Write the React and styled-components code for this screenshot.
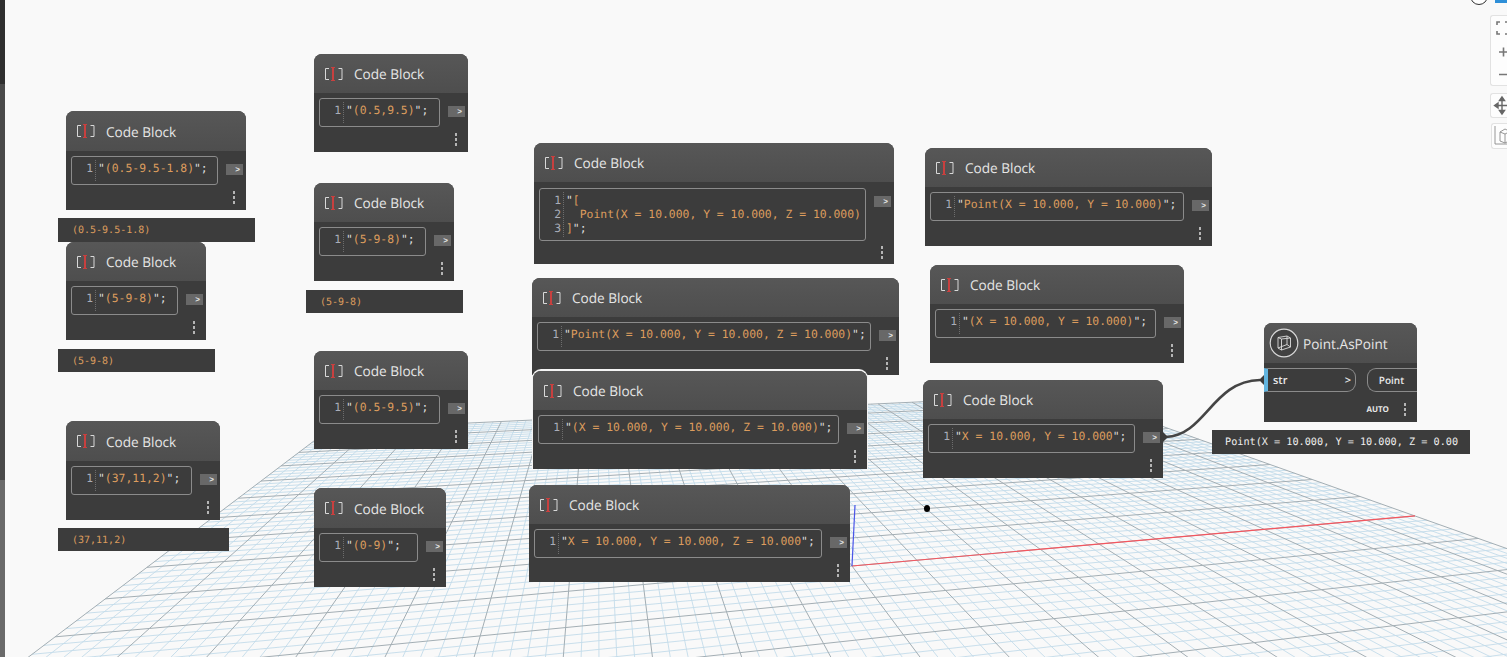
import React from 'react'
import styled, { createGlobalStyle } from 'styled-components'

const GlobalStyle = createGlobalStyle`
    html, body {
        margin: 0;
        padding: 0;
        height: 100%;
        overflow: hidden;
        background: #f9f9f9;
    }
    #root {
        height: 100%;
    }
`

const Canvas = styled.div`
    position: relative;
    width: 1507px;
    height: 657px;
    overflow: hidden;
    background: #f9f9f9;
    text-rendering: geometricPrecision;
`

const Rail = styled.div`
    position: absolute;
    left: 0;
    top: 0;
    bottom: 0;
    width: 5px;
    background: linear-gradient(to bottom, #2f2f2f 0, #2f2f2f 84px, #4a4a4a 84px, #4a4a4a 480px, #6a6a6a 480px);
`

const Layer = styled.svg`
    position: absolute;
    left: 0;
    top: 0;
`

const Node = styled.div`
    position: absolute;
    display: flex;
    flex-direction: column;
    box-sizing: border-box;
    border-top-left-radius: 8px;
    border-top-right-radius: 8px;
    background: #3c3c3c;
    overflow: hidden;
    box-shadow: ${(p) => (p.$selected ? '0 -1px 0 1px #f4f4f4' : 'none')};
`

const Header = styled.div`
    display: flex;
    align-items: center;
    flex: 0 0 ${(p) => p.$height}px;
    box-sizing: border-box;
    padding-left: ${(p) => (p.$compact ? '5px' : '11px')};
    background: linear-gradient(to bottom, #575757, #4e4e4e);
    color: #e6e6e6;
    font-family: 'Open Sans', sans-serif;
    font-size: 13.6px;
    white-space: nowrap;
`

const Title = styled.span`
    margin-left: ${(p) => (p.$compact ? '4px' : '11px')};
`

const Body = styled.div`
    display: flex;
    align-items: flex-start;
    padding: ${(p) => p.$top}px 3px 0 5px;
`

const Editor = styled.div`
    display: grid;
    grid-template-columns: 24px 1fr;
    flex: 1 1 auto;
    box-sizing: border-box;
    min-height: 29px;
    border: 1px solid #8b8b8b;
    border-radius: 3px;
    font-family: 'DejaVu Sans Mono', monospace;
    font-size: 11.4px;
    line-height: 14px;
    white-space: pre;
    overflow: hidden;
`

const Gutter = styled.div`
    margin: 3px 0;
    padding: 1px 2px 2px 0;
    border-right: 1px dotted #6d6d6d;
    text-align: right;
    color: #a9adb8;
`

const Code = styled.div`
    padding: 4px 0 4px 2px;
    color: #dc9c5e;
`

const Punct = styled.span`
    color: #dddddd;
`

const Port = styled.div`
    flex: 0 0 17px;
    width: 17px;
    height: 11px;
    margin: 8px 0 0 8px;
    background: #686868;
    color: #eeeeee;
    font-family: 'Liberation Sans', sans-serif;
    font-size: 8px;
    font-weight: 700;
    line-height: 11px;
    text-align: right;
    padding-right: 3px;
    box-sizing: border-box;
`

const Footer = styled.div`
    display: flex;
    flex: 1 1 auto;
    align-items: center;
    justify-content: flex-end;
    gap: 15px;
    padding: ${(p) => (p.$low ? '4px' : '0')} 11px 0 0;
`

const Dots = styled.div`
    display: flex;
    flex-direction: column;
    gap: 2px;

    i {
        display: block;
        width: 2px;
        height: 3px;
        background: #b5b5b5;
    }
`

const Auto = styled.span`
    color: #e8e8e8;
    font-family: 'Open Sans', sans-serif;
    font-size: 8px;
    font-weight: 700;
`

const Preview = styled.div`
    position: absolute;
    box-sizing: border-box;
    padding: 1px 0 0 ${(p) => p.$inset}px;
    background: #3c3c3c;
    color: ${(p) => p.$color};
    font-family: 'DejaVu Sans Mono', monospace;
    font-size: ${(p) => p.$size}px;
    display: flex;
    align-items: center;
    white-space: pre;
    overflow: hidden;
`

const Ports = styled.div`
    display: flex;
    justify-content: space-between;
    margin-top: 5px;
    height: 24px;
`

const InPort = styled.div`
    display: flex;
    align-items: center;
    justify-content: space-between;
    width: 92px;
    box-sizing: border-box;
    padding: 0 4px 0 5px;
    border: 1px solid #8b8b8b;
    border-left: 4px solid #62b5e0;
    border-radius: 0 9px 9px 0;
    color: #e8e8e8;
    font-family: 'Open Sans', sans-serif;
    font-size: 11px;
    font-weight: 600;
`

const OutPort = styled.div`
    display: flex;
    align-items: center;
    justify-content: center;
    width: 50px;
    box-sizing: border-box;
    padding-right: 2px;
    border: 1px solid #8b8b8b;
    border-right: none;
    border-radius: 9px 0 0 9px;
    color: #e8e8e8;
    font-family: 'Open Sans', sans-serif;
    font-size: 10px;
    font-weight: 600;
`

const Toolbar = styled.div`
    position: absolute;
    display: flex;
    flex-direction: column;
    align-items: flex-start;
    box-sizing: border-box;
    background: #fdfdfd;
    border: 1px solid #e2e2e2;
    border-right: none;
    border-radius: 3px 0 0 3px;
`

const TopCircle = styled.div`
    position: absolute;
    left: 1470px;
    top: -13px;
    width: 16px;
    height: 16px;
    border: 1px solid #333333;
    border-radius: 50%;
    background: #ffffff;
`

const TopSwatch = styled.div`
    position: absolute;
    left: 1495px;
    top: 0;
    width: 12px;
    height: 3px;
    background: #2e8fd8;
`

const Pointer = styled.div`
    position: absolute;
    left: 924px;
    top: 505px;
    width: 6px;
    height: 7px;
    border-radius: 50%;
    background: #000000;
`

// perspective of the ground plane, worked out from the axes on the screen
const ORIGIN = [852, 566]
const VANISH_X = [4688, 225]
const VANISH_Y = [598, 226]
const ALPHA = 0.172
const BETA = 0.843
const NEAR = -0.6

function project(u, v) {
    const a = u * ALPHA
    const b = v * BETA
    const w = 1 + a + b
    return [
        (ORIGIN[0] + a * VANISH_X[0] + b * VANISH_Y[0]) / w,
        (ORIGIN[1] + a * VANISH_X[1] + b * VANISH_Y[1]) / w,
    ]
}

function gridLines() {
    const lines = []
    for (let i = -50; i <= 50; i++) {
        const t = i / 50
        const major = i % 5 === 0
        const [x1, y1] = project(t, NEAR)
        const [x2, y2] = project(t, 1)
        lines.push({ key: `u${i}`, x1, y1, x2, y2, major })
        if (t >= NEAR) {
            const [x3, y3] = project(-1, t)
            const [x4, y4] = project(1, t)
            lines.push({ key: `v${i}`, x1: x3, y1: y3, x2: x4, y2: y4, major })
        }
    }
    // majors go last so they sit on top of the pale lines
    return lines.sort((a, b) => Number(a.major) - Number(b.major))
}

function Ground() {
    const [xEnd, yEnd] = project(1, 0)
    return (
        <Layer width="1507" height="657" viewBox="0 0 1507 657">
            {gridLines().map((l) => (
                <line
                    key={l.key}
                    x1={l.x1}
                    y1={l.y1}
                    x2={l.x2}
                    y2={l.y2}
                    stroke={l.major ? '#a3aeb4' : '#c3dbea'}
                    strokeWidth={l.major ? 1 : 0.9}
                />
            ))}
            <line x1={ORIGIN[0]} y1={ORIGIN[1]} x2={xEnd} y2={yEnd} stroke="#f4565f" strokeWidth="1.2" />
            <line x1={ORIGIN[0]} y1={ORIGIN[1]} x2="855" y2="505" stroke="#4a55e8" strokeWidth="1.2" />
        </Layer>
    )
}

function BlockIcon() {
    return (
        <svg width="18" height="14" viewBox="0 0 18 14">
            <path d="M4 1.5H0.5V12.5H4" fill="none" stroke="#d8d8d8" strokeWidth="1" />
            <path d="M13.5 1.5H17V12.5H13.5" fill="none" stroke="#d8d8d8" strokeWidth="1" />
            <path d="M6 0.5H10M6 13.5H10" fill="none" stroke="#c8403f" strokeWidth="1" />
            <path d="M8 0.5V13.5" fill="none" stroke="#c8403f" strokeWidth="2" />
        </svg>
    )
}

function PointIcon() {
    return (
        <svg width="30" height="30" viewBox="0 0 30 30">
            <circle cx="15" cy="15" r="13.8" fill="#414141" stroke="#d6d6d6" strokeWidth="1.2" />
            <path d="M9 9.5L18 8L21.5 10V19L12.5 22L9 20Z M18 8V16.5L9 20 M18 16.5L21.5 19 M12.5 11V22 M9 9.5L12.5 11L21.5 10" fill="none" stroke="#dcdcdc" strokeWidth="0.9" />
        </svg>
    )
}

function MoreDots() {
    return (
        <Dots>
            <i />
            <i />
            <i />
        </Dots>
    )
}

function CodeLine({ text }) {
    const parts = text.split(/(^"|";$|"$)/).filter(Boolean)
    return (
        <div>
            {parts.map((part, i) =>
                part.startsWith('"') ? <Punct key={i}>{part}</Punct> : <span key={i}>{part}</span>
            )}
        </div>
    )
}

function CodeBlock({ x, y, w, h, lines, selected }) {
    const tall = lines.length > 1
    return (
        <Node $selected={selected} style={{ left: x, top: y, width: w, height: h }}>
            <Header $height={h === 99 ? 40 : 39}>
                <BlockIcon />
                <Title>Code Block</Title>
            </Header>
            <Body $top={tall ? 6 : 5}>
                <Editor>
                    <Gutter>
                        {lines.map((_, i) => (
                            <div key={i}>{i + 1}</div>
                        ))}
                    </Gutter>
                    <Code>
                        {lines.map((text, i) => (
                            <CodeLine key={i} text={text} />
                        ))}
                    </Code>
                </Editor>
                <Port>&gt;</Port>
            </Body>
            <Footer>
                <MoreDots />
            </Footer>
        </Node>
    )
}

const BLOCKS = [
    { x: 314, y: 54, w: 154, h: 98, lines: ['"(0.5,9.5)";'] },
    { x: 66, y: 111, w: 180, h: 99, lines: ['"(0.5-9.5-1.8)";'] },
    { x: 314, y: 183, w: 140, h: 98, lines: ['"(5-9-8)";'] },
    { x: 66, y: 242, w: 140, h: 98, lines: ['"(5-9-8)";'] },
    { x: 314, y: 351, w: 154, h: 98, lines: ['"(0.5-9.5)";'] },
    { x: 66, y: 421, w: 154, h: 99, lines: ['"(37,11,2)";'] },
    { x: 314, y: 488, w: 132, h: 99, lines: ['"(0-9)";'] },
    { x: 534, y: 143, w: 360, h: 121, lines: ['"[', '  Point(X = 10.000, Y = 10.000, Z = 10.000)', ']";'] },
    { x: 532, y: 278, w: 367, h: 97, lines: ['"Point(X = 10.000, Y = 10.000, Z = 10.000)";'] },
    { x: 533, y: 371, w: 334, h: 98, selected: true, lines: ['"(X = 10.000, Y = 10.000, Z = 10.000)";'] },
    { x: 529, y: 485, w: 321, h: 97, lines: ['"X = 10.000, Y = 10.000, Z = 10.000";'] },
    { x: 925, y: 148, w: 287, h: 98, lines: ['"Point(X = 10.000, Y = 10.000)";'] },
    { x: 930, y: 265, w: 254, h: 98, lines: ['"(X = 10.000, Y = 10.000)";'] },
    { x: 923, y: 380, w: 240, h: 98, lines: ['"X = 10.000, Y = 10.000";'] },
]

const PREVIEWS = [
    { x: 58, y: 218, w: 197, h: 24, text: '(0.5-9.5-1.8)' },
    { x: 58, y: 349, w: 157, h: 23, text: '(5-9-8)' },
    { x: 58, y: 528, w: 171, h: 23, text: '(37,11,2)' },
    { x: 306, y: 290, w: 157, h: 23, text: '(5-9-8)' },
]

export default function App() {
    return (
        <Canvas>
            <GlobalStyle />
            <Ground />
            <Rail />
            {PREVIEWS.map((p) => (
                <Preview
                    key={`${p.x}-${p.y}`}
                    $inset={14}
                    $size={10}
                    $color="#dc9c5e"
                    style={{ left: p.x, top: p.y, width: p.w, height: p.h }}
                >
                    {p.text}
                </Preview>
            ))}
            {BLOCKS.map((b) => (
                <CodeBlock key={`${b.x}-${b.y}`} {...b} />
            ))}
            <Node style={{ left: 1264, top: 323, width: 153, height: 99 }}>
                <Header $compact $height={40}>
                    <PointIcon />
                    <Title $compact>Point.AsPoint</Title>
                </Header>
                <Ports>
                    <InPort>
                        <span>str</span>
                        <span>&gt;</span>
                    </InPort>
                    <OutPort>Point</OutPort>
                </Ports>
                <Footer $low>
                    <Auto>AUTO</Auto>
                    <MoreDots />
                </Footer>
            </Node>
            <Preview $inset={13} $size={10.2} $color="#eeeeee" style={{ left: 1212, top: 430, width: 258, height: 24 }}>
                Point(X = 10.000, Y = 10.000, Z = 0.00
            </Preview>
            <Layer width="1507" height="657" viewBox="0 0 1507 657" style={{ pointerEvents: 'none' }}>
                <path d="M1166 437C1206 435 1212 381 1260 380" fill="none" stroke="#454545" strokeWidth="2.6" />
                <path d="M1163 432L1168 437L1163 442Z" fill="#3c3c3c" />
                <path d="M1264 375V385L1259 380Z" fill="#3c3c3c" />
            </Layer>
            <Pointer />
            <TopCircle />
            <TopSwatch />
            <Toolbar style={{ left: 1490, top: 15, width: 17, height: 71 }}>
                <svg width="17" height="69" viewBox="0 0 17 69">
                    <path d="M6 9V6H9M14 6H17M6 15V18H9M14 18H17" fill="none" stroke="#777777" strokeWidth="1.6" />
                    <path d="M8 36H17M12.5 31.5V40.5M8 58.5H17" fill="none" stroke="#777777" strokeWidth="1.6" />
                </svg>
            </Toolbar>
            <Toolbar style={{ left: 1490, top: 93, width: 17, height: 25 }}>
                <svg width="17" height="23" viewBox="0 0 17 23">
                    <path d="M5 11.5H17M11 5V18M11 3L8.5 6.5H13.5ZM11 20L8.5 16.5H13.5ZM3.5 11.5L7 9V14Z" fill="#666666" stroke="#666666" strokeWidth="1.4" />
                </svg>
            </Toolbar>
            <Toolbar style={{ left: 1491, top: 123, width: 16, height: 26 }}>
                <svg width="16" height="24" viewBox="0 0 16 24">
                    <path d="M3 2V20H16M8 8L13 5L17 7V17L13 19L8 17ZM8 8L13 10L17 8M13 10V19" fill="none" stroke="#8a8a8a" strokeWidth="0.9" />
                </svg>
            </Toolbar>
        </Canvas>
    )
}
